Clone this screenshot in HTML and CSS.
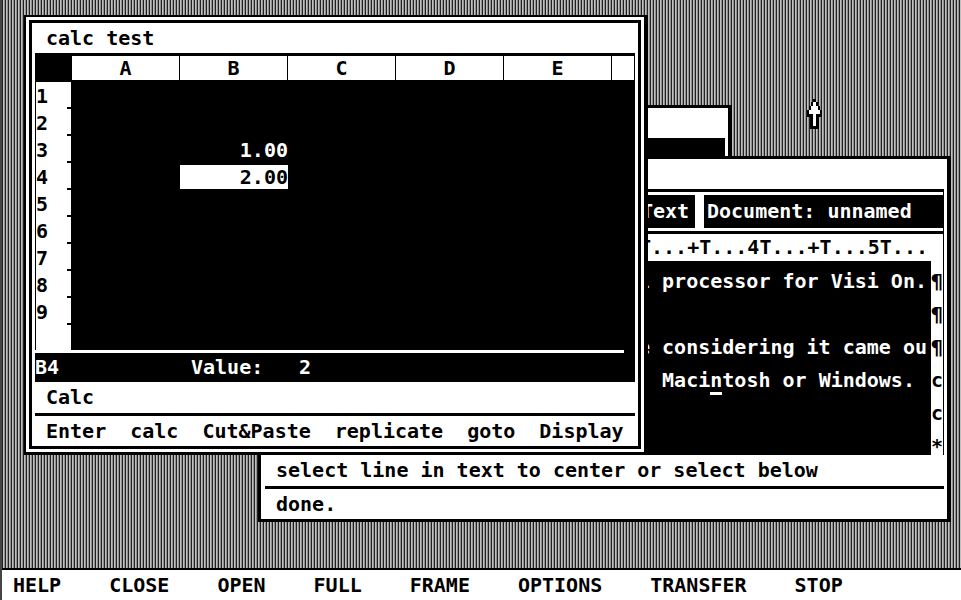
FILE: index.html
```
<!DOCTYPE html>
<html lang="en">
<head>
    <meta charset="UTF-8">
    <meta name="viewport" content="width=device-width, initial-scale=1.0">
    <title>Visi On</title>
    <link rel="stylesheet" href="styles.css">
</head>
<body>
    <main class="desktop">
        <section class="window back-window" aria-label="Window">
            <div class="back-title"></div>
            <div class="back-content"></div>
        </section>

        <section class="window doc-window" aria-label="Document">
            <div class="doc-title"></div>
            <div class="doc-status">
                <div class="doc-mode">Text</div>
                <div class="doc-name">Document: unnamed</div>
            </div>
            <div class="ruler">T...+T...4T...+T...5T...</div>
            <div class="doc-body">
                <div class="doc-text">
                    <p>l processor for Visi On.</p>
                    <p></p>
                    <p>e considering it came ou</p>
                    <p>. Maci<span class="cursor">n</span>tosh or Windows.</p>
                </div>
                <div class="markers">
                    <span>¶</span>
                    <span>¶</span>
                    <span>¶</span>
                    <span>c</span>
                    <span>c</span>
                    <span>*</span>
                </div>
            </div>
            <div class="prompt">select line in text to center or select below</div>
            <div class="menu">
                <button type="button">done.</button>
            </div>
        </section>

        <section class="window calc-window" aria-label="calc test">
            <div class="calc-frame">
                <h1>calc test</h1>
                <table class="sheet">
                    <thead>
                        <tr><th class="corner"></th><th>A</th><th>B</th><th>C</th><th>D</th><th>E</th><th class="rest"></th></tr>
                    </thead>
                    <tbody>
                        <tr><th>1</th><td></td><td></td><td></td><td></td><td></td><td></td></tr>
                        <tr><th>2</th><td></td><td></td><td></td><td></td><td></td><td></td></tr>
                        <tr><th>3</th><td></td><td>1.00</td><td></td><td></td><td></td><td></td></tr>
                        <tr><th>4</th><td></td><td><span class="selected">2.00</span></td><td></td><td></td><td></td><td></td></tr>
                        <tr><th>5</th><td></td><td></td><td></td><td></td><td></td><td></td></tr>
                        <tr><th>6</th><td></td><td></td><td></td><td></td><td></td><td></td></tr>
                        <tr><th>7</th><td></td><td></td><td></td><td></td><td></td><td></td></tr>
                        <tr><th>8</th><td></td><td></td><td></td><td></td><td></td><td></td></tr>
                        <tr><th>9</th><td></td><td></td><td></td><td></td><td></td><td></td></tr>
                        <tr class="filler"><th></th><td colspan="6"></td></tr>
                    </tbody>
                </table>
                <div class="cell-status">
                    <span class="cell-name">B4</span>
                    <span class="cell-label">Value:</span>
                    <span>2</span>
                </div>
                <div class="prompt">Calc</div>
                <div class="menu">
                    <button type="button">Enter</button>
                    <button type="button">calc</button>
                    <button type="button">Cut&amp;Paste</button>
                    <button type="button">replicate</button>
                    <button type="button">goto</button>
                    <button type="button">Display</button>
                </div>
            </div>
        </section>

        <svg class="pointer" width="15" height="30" viewBox="0 0 15 30" aria-hidden="true">
            <path fill="#000" d="M6 0h3v3h2v4h2v4h2v7h-3v12H3V18H0v-7h2V7h2V3h2z"/>
            <path fill="#fff" d="M6 3h3v4h2v4h2v4H9v12H6V15H2v-4h2V7h2z"/>
        </svg>
    </main>

    <nav class="command-bar">
        <button type="button">HELP</button>
        <button type="button">CLOSE</button>
        <button type="button">OPEN</button>
        <button type="button">FULL</button>
        <button type="button">FRAME</button>
        <button type="button">OPTIONS</button>
        <button type="button">TRANSFER</button>
        <button type="button">STOP</button>
    </nav>
</body>
</html>
```
FILE: styles.css
```
* {
    box-sizing: border-box;
}
body {
    display: flex;
    flex-direction: column;
    min-height: 100vh;
    margin: 0;
    border-left: 2px solid #444;
    font-family: "DejaVu Sans Mono", "Liberation Mono", monospace;
    font-size: 20px;
    font-weight: bold;
    line-height: 30px;
    color: black;
    background: white;
}
h1, p {
    margin: 0;
    font-size: 20px;
}
button {
    padding: 0;
    border: none;
    background: none;
    color: inherit;
    font: inherit;
    cursor: pointer;
}

/* desktop */
.desktop {
    position: relative;
    flex: 1;
    overflow: hidden;
    background: repeating-linear-gradient(to right, #222 0, #222 1px, #c0c0c0 1px, #c0c0c0 2px, #909090 2px, #909090 3px);
}
.window {
    position: absolute;
    border: 3px solid black;
    background: white;
}
.prompt {
    height: 34px;
    padding-left: 11px;
    border-bottom: 3px solid black;
    white-space: nowrap;
}
.menu {
    display: flex;
    gap: 24px;
    padding-left: 11px;
}

/* window at the back */
.back-window {
    top: 105px;
    left: 400px;
    width: 330px;
    border-right-width: 4px;
    padding-right: 3px;
}
.back-title {
    height: 30px;
}
.back-content {
    height: 60px;
    background: black;
}

/* word processor */
.doc-window {
    top: 156px;
    left: 256px;
    width: 693px;
    padding: 0 3px 0 4px;
    border-right-width: 4px;
}
.doc-title {
    height: 30px;
}
.doc-status {
    display: flex;
    gap: 9px;
    padding: 3px 0;
    border: solid black;
    border-width: 3px 1px 3px 0;
    line-height: 33px;
    color: white;
}
.doc-mode {
    width: 430px;
    padding-left: 376px;
    background: black;
}
.doc-name {
    flex: 1;
    padding-left: 3px;
    background: black;
}
.ruler {
    height: 27px;
    padding-left: 374px;
    border-right: 1px solid black;
    line-height: 27px;
}
.doc-body {
    display: flex;
    height: 194px;
    border-right: 1px solid black;
    line-height: 33px;
}
.doc-text {
    flex: 1;
    padding: 4px 0 0 373px;
    background: black;
    color: white;
}
.doc-text p {
    height: 33px;
    white-space: nowrap;
}
.cursor {
    border-bottom: 3px solid white;
}
.markers {
    display: flex;
    flex-direction: column;
    width: 12px;
    padding-top: 4px;
}
.markers span {
    height: 33px;
}
.markers span:last-child {
    height: 25px;
}

/* spreadsheet */
.calc-window {
    top: 15px;
    left: 22px;
    width: 624px;
    padding: 3px;
    border-width: 2px 4px 3px 2px;
}
.calc-frame {
    padding: 0 3px;
    border: 3px solid black;
}
.calc-frame h1 {
    padding-left: 11px;
}
.sheet {
    width: 100%;
    border-top: 3px solid black;
    border-spacing: 0;
    table-layout: fixed;
    background: black;
    line-height: 24px;
}
.sheet th, .sheet td {
    padding: 0;
}
.sheet thead th {
    width: 108px;
    height: 26px;
    border-right: 1px solid black;
    border-bottom: 2px solid black;
    background: white;
}
.sheet thead .corner {
    width: 37px;
    background: black;
}
.sheet thead .rest {
    width: auto;
}
.sheet tbody th {
    height: 27px;
    border: solid black;
    border-width: 0 1px 0 1px;
    background: linear-gradient(black, black) right bottom / 4px 2px no-repeat white;
    text-align: left;
}
.sheet td {
    color: white;
    text-align: right;
}
.sheet .filler th {
    height: 25px;
    background: white;
}
.selected {
    display: block;
    background: white;
    color: black;
}
.cell-status {
    display: flex;
    height: 32px;
    background: linear-gradient(white, white) left top / calc(100% - 11px) 3px no-repeat black;
    padding-top: 2px;
    color: white;
}
.cell-name {
    width: 156px;
}
.cell-label {
    width: 108px;
}

.pointer {
    position: absolute;
    top: 99px;
    left: 805px;
}

/* bottom commands */
.command-bar {
    display: flex;
    gap: 48px;
    padding-left: 11px;
    border-top: 2px solid black;
}
```
